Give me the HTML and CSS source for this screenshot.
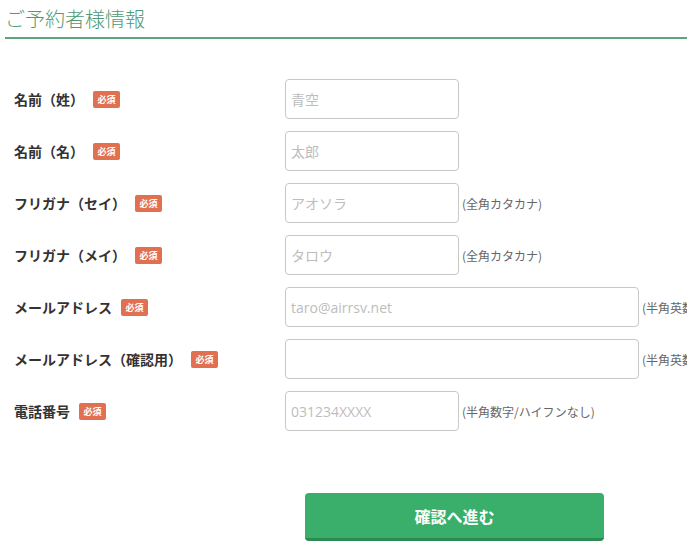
FILE: index.html
```html
<!DOCTYPE html>
<html lang="ja">
<head>
    <meta charset="UTF-8">
    <meta name="viewport" content="width=device-width, initial-scale=1.0">
    <title>ご予約者様情報</title>
    <link rel="stylesheet" href="styles.css">
</head>
<body>
    <div class="container">
        <h2 class="section-title">ご予約者様情報</h2>
        <form class="form-table">
            <div class="row">
                <label>名前（姓）<span class="req">必須</span></label>
                <div class="field"><input type="text" class="short" placeholder="青空"></div>
            </div>
            <div class="row">
                <label>名前（名）<span class="req">必須</span></label>
                <div class="field"><input type="text" class="short" placeholder="太郎"></div>
            </div>
            <div class="row">
                <label>フリガナ（セイ）<span class="req">必須</span></label>
                <div class="field"><input type="text" class="short" placeholder="アオソラ"><span class="hint">(全角カタカナ)</span></div>
            </div>
            <div class="row">
                <label>フリガナ（メイ）<span class="req">必須</span></label>
                <div class="field"><input type="text" class="short" placeholder="タロウ"><span class="hint">(全角カタカナ)</span></div>
            </div>
            <div class="row">
                <label>メールアドレス<span class="req">必須</span></label>
                <div class="field"><input type="email" class="wide" placeholder="taro@airrsv.net"><span class="hint">(半角英数字)</span></div>
            </div>
            <div class="row">
                <label>メールアドレス（確認用）<span class="req">必須</span></label>
                <div class="field"><input type="email" class="wide"><span class="hint">(半角英数字)</span></div>
            </div>
            <div class="row">
                <label>電話番号<span class="req">必須</span></label>
                <div class="field"><input type="tel" class="short" placeholder="031234XXXX"><span class="hint">(半角数字/ハイフンなし)</span></div>
            </div>
            <div class="actions">
                <button type="button">確認へ進む</button>
            </div>
        </form>
    </div>
</body>
</html>
```
FILE: styles.css
```css
body {
    font-family: "Noto Sans CJK JP", "Open Sans", sans-serif;
    background-color: #ffffff;
    color: #333;
    margin: 0;
    padding: 0;
    overflow: hidden;
}
.container {
    width: 899px;
    margin-left: 5px;
    padding-top: 4px;
}
.section-title {
    font-size: 20px;
    font-weight: 300;
    color: #4f9a74;
    line-height: 30px;
    margin: 0;
    padding-bottom: 3px;
    border-bottom: 2px solid #5ba47c;
}
.form-table {
    padding-top: 40px;
}
.row {
    display: grid;
    grid-template-columns: 280px 1fr;
    align-items: center;
    margin-bottom: 12px;
}
.row label {
    display: flex;
    align-items: center;
    padding-left: 9px;
    font-size: 14px;
    font-weight: bold;
    color: #333;
    white-space: nowrap;
}
.req {
    display: inline-block;
    margin-left: 9px;
    width: 27px;
    height: 17px;
    line-height: 17px;
    border-radius: 2px;
    background-color: #e0704f;
    color: #fff;
    font-size: 9px;
    text-align: center;
}
.field {
    display: flex;
    align-items: center;
    white-space: nowrap;
}
input {
    height: 40px;
    padding: 0 5px;
    border: 1px solid #c8c8c8;
    border-radius: 4px;
    font-family: "Open Sans", "Noto Sans CJK JP", sans-serif;
    font-size: 14px;
    color: #333;
    box-sizing: border-box;
}
input::placeholder {
    color: #bdbdbd;
}
input.short {
    width: 174px;
}
input.wide {
    width: 354px;
}
.hint {
    margin-left: 3px;
    font-size: 12px;
    color: #666;
}
.actions {
    padding-top: 50px;
    text-align: center;
}
button {
    width: 299px;
    height: 48px;
    background-color: #3aae6b;
    border: none;
    border-bottom: 3px solid #2a8a52;
    border-radius: 4px;
    color: #fff;
    font-family: "Noto Sans CJK JP", sans-serif;
    font-size: 16px;
    font-weight: bold;
    cursor: pointer;
}
```
